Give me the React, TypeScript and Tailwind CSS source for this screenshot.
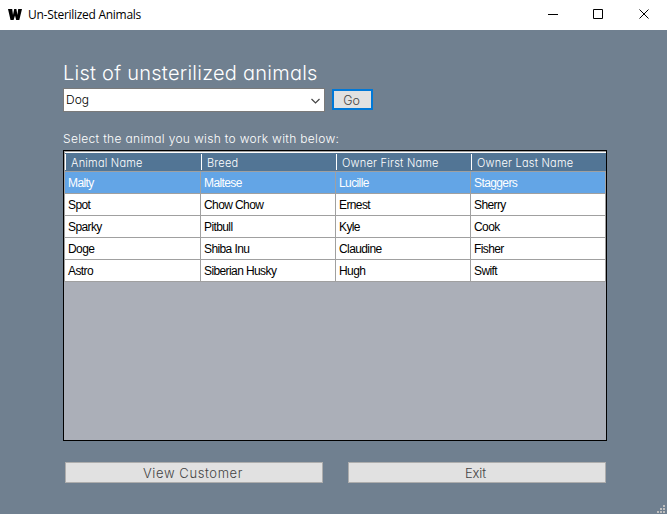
import React from "react";

const gothic = "font-['Inter',sans-serif] font-light [font-feature-settings:'cv11'] whitespace-nowrap";

const headers = ["Animal Name", "Breed", "Owner First Name", "Owner Last Name"];

const rows = [
  ["Malty", "Maltese", "Lucille", "Staggers"],
  ["Spot", "Chow Chow", "Ernest", "Sherry"],
  ["Sparky", "Pitbull", "Kyle", "Cook"],
  ["Doge", "Shiba Inu", "Claudine", "Fisher"],
  ["Astro", "Siberian Husky", "Hugh", "Swift"],
];

const actions = [
  { label: "View Customer", style: "pr-[2px] tracking-[0.6px]" },
  { label: "Exit", style: "pr-[3px] tracking-[-0.1px]" },
];

function TitleBar() {
  return (
    <header className="flex h-[30px] shrink-0 items-center bg-white pl-2">
      <svg width="14" height="12" viewBox="0 0 14 12" className="shrink-0">
        <path d="M0 0h4.2l.8 6L6.2 0h2.2l1 6 .8-6H14l-2.7 11H8.2L7 6.5 5.6 11H2.5z" fill="#000" />
      </svg>
      <span className="ml-[6px] whitespace-nowrap font-['Open_Sans',sans-serif] text-[12px] leading-4 tracking-[-0.28px] text-black">
        Un-Sterilized Animals
      </span>
      <svg width="103" height="10" viewBox="0 0 103 10" className="mr-4 ml-auto -translate-y-px" fill="none" stroke="#000">
        <path d="M0 5.5h10" />
        <path d="M45.5.5h9v9h-9z" />
        <path d="M91.5.5l9 9m0-9l-9 9" />
      </svg>
    </header>
  );
}

function Grid() {
  return (
    <section className="mt-[3px] h-[291px] w-[544px] border border-black bg-[#abafb8]">
      <div className="h-px bg-[#a0a0a0]" />
      <div className="border-l border-[#a0a0a0]">
        <div className="grid h-[20px] grid-cols-[136px_135px_135px_135px] border-t border-b border-t-white border-b-[#a0a0a0] bg-[#527595]">
          {headers.map((label) => (
            <div key={label} className="flex items-center">
              <i className="h-4 w-px bg-white" />
              <span className={`${gothic} ml-[5px] pt-px text-[11px] leading-4 tracking-[0.22px] text-white`}>{label}</span>
            </div>
          ))}
        </div>
        {rows.map((row, i) => (
          <div
            key={row[0]}
            className={`grid h-[22px] grid-cols-[136px_135px_135px_135px] ${i === 0 ? "bg-[#63a5e6] text-white" : "bg-white text-black"}`}
          >
            {row.map((cell) => (
              <div
                key={cell}
                className="flex items-center border-r border-b border-[#a0a0a0] pl-[3px] font-['Liberation_Sans',sans-serif] text-[12px] leading-4 tracking-[-0.6px] whitespace-nowrap"
              >
                {cell}
              </div>
            ))}
          </div>
        ))}
      </div>
    </section>
  );
}

export default function App() {
  return (
    <div className="relative flex h-[514px] w-[667px] flex-col overflow-hidden bg-[#708090]">
      <TitleBar />
      <main className="flex flex-col pt-[30px] pl-[63px]">
        <h1 className={`${gothic} h-[28px] text-[20px] leading-[26px] tracking-[0.25px] text-white`}>
          List of unsterilized animals
        </h1>
        <div className="flex h-6 items-start gap-[7px]">
          <div className="flex h-6 w-[262px] items-center justify-between border border-[#7a7a7a] bg-white pr-[4px] pl-[2px]">
            <span className={`${gothic} -mt-px text-[12px] leading-4 text-black`}>Dog</span>
            <svg width="9" height="6" viewBox="0 0 9 6" fill="none" stroke="#444" strokeWidth="1.2" className="mt-px">
              <path d="M.5 1l4 4 4-4" />
            </svg>
          </div>
          <button className={`${gothic} mt-px h-[21px] w-[41px] border-2 border-[#0078d7] bg-[#e1e1e1] pt-px pr-[2px] text-[12.5px] leading-[17px] text-[#444]`}>
            Go
          </button>
        </div>
        <p className={`${gothic} mt-[19px] h-4 text-[12px] leading-4 tracking-[0.32px] text-white`}>
          Select the animal you wish to work with below:
        </p>
        <Grid />
        <div className="mt-[21px] ml-[2px] flex gap-[25px]">
          {actions.map(({ label, style }) => (
            <button
              key={label}
              className={`${gothic} ${style} h-[21px] w-[258px] border border-[#adadad] bg-[#e1e1e1] pt-px text-[13px] leading-[19px] text-[#444]`}
            >
              {label}
            </button>
          ))}
        </div>
      </main>
      <svg width="8" height="8" viewBox="0 0 8 8" className="absolute right-[2px] bottom-[1px]" fill="#bfbfbf">
        <path d="M6 0h2v2H6zM3 3h2v2H3zM6 3h2v2H6zM0 6h2v2H0zM3 6h2v2H3zM6 6h2v2H6z" />
      </svg>
    </div>
  );
}
